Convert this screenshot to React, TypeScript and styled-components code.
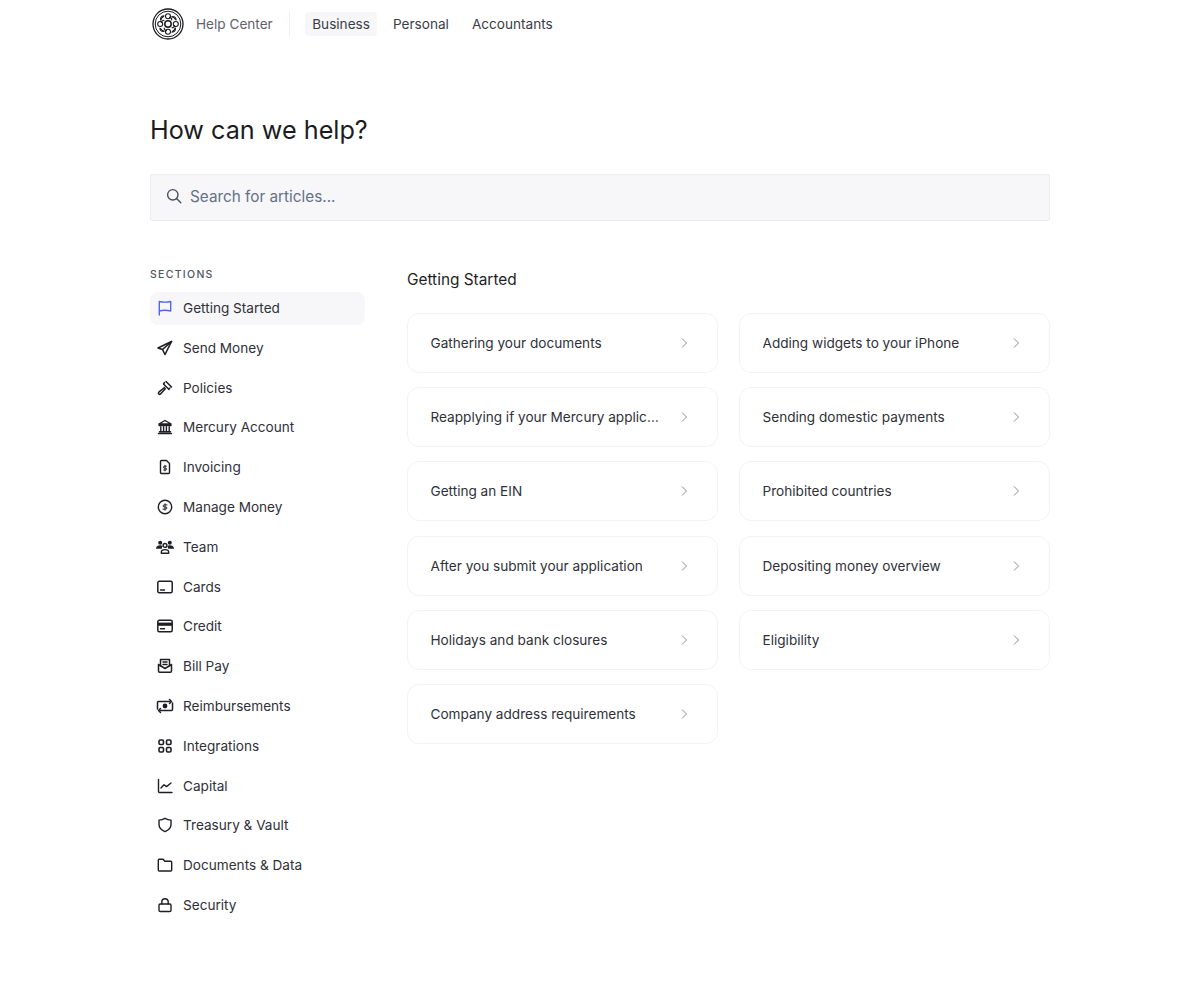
import React from "react";
import styled, { createGlobalStyle } from "styled-components";

const Global = createGlobalStyle`
  html, body { margin: 0; padding: 0; background: #fff; }
  body { font-family: "Inter", "Liberation Sans", sans-serif; color: #1e1f25; }
  * { box-sizing: border-box; }
`;
const Page = styled.div`
  width: 900px;
  margin: 0 auto;
  height: 1006px;
  overflow: hidden;
`;
const Header = styled.header`
  height: 48px;
  display: flex;
  align-items: center;
`;
const LogoMark = styled.svg`
  width: 32px;
  height: 32px;
  margin-left: 2px;
  color: #1a1a1f;
`;
const HelpLabel = styled.span`
  margin-left: 12px;
  font-size: 13.6px;
  color: #5f626d;
`;
const Divider = styled.span`
  width: 1px;
  height: 24px;
  margin: 0 15px 0 16px;
  background: #f0f0f3;
`;
const NavList = styled.nav`
  display: flex;
  align-items: center;
  gap: 8px;
`;
const NavLink = styled.a<{ $active?: boolean }>`
  padding: 4px 7.5px;
  height: 24px;
  line-height: 16px;
  border-radius: 4px;
  font-size: 13.6px;
  color: #3a3c45;
  background: ${(p) => (p.$active ? "#f7f7f9" : "transparent")};
`;
const Title = styled.h1`
  margin: 65px 0 0;
  height: 34px;
  font-size: 25.2px;
  line-height: 34px;
  font-weight: 400;
  color: #1b1c22;
`;
const SearchBar = styled.div`
  margin-top: 27px;
  height: 47px;
  display: flex;
  align-items: center;
  gap: 8px;
  padding: 0 0 3px 15px;
  background: #f7f7f9;
  border: 1px solid #ececef;
  border-radius: 2px;
`;
const SearchText = styled.span`
  font-size: 15.3px;
  color: #667087;
`;
const Columns = styled.div`
  margin-top: 47px;
  display: grid;
  grid-template-columns: 215px 643px;
  column-gap: 42px;
`;
const SectionLabel = styled.div`
  margin-top: 1px;
  height: 12px;
  line-height: 12px;
  font-size: 10.5px;
  font-weight: 500;
  letter-spacing: 1.3px;
  color: #535461;
  margin-bottom: 11px;
`;
const SideNav = styled.div`
  display: flex;
  flex-direction: column;
  gap: 6.8px;
`;
const SideItem = styled.a<{ $active?: boolean }>`
  height: 33px;
  display: flex;
  align-items: center;
  gap: 10px;
  padding: 0 0 1px 7px;
  border-radius: 8px;
  font-size: 13.6px;
  color: #2f3038;
  background: ${(p) => (p.$active ? "#f7f7f9" : "transparent")};
`;
const Icon = styled.svg<{ $active?: boolean }>`
  width: 16px;
  height: 16px;
  flex: none;
  overflow: visible;
  color: ${(p) => (p.$active ? "#5266eb" : "#1e1f25")};
`;
const MainTitle = styled.h2`
  margin: 2px 0 0;
  height: 20px;
  line-height: 20px;
  font-size: 15.4px;
  font-weight: 400;
  color: #1e1f25;
`;
const CardGrid = styled.div`
  margin-top: 22.5px;
  display: grid;
  grid-template-columns: 311px 311px;
  column-gap: 21px;
  row-gap: 14.4px;
`;
const Card = styled.a`
  height: 60px;
  display: flex;
  align-items: center;
  justify-content: space-between;
  padding: 0 27px 0 22.5px;
  border: 1px solid #f3f3f5;
  border-radius: 12px;
  font-size: 13.6px;
  color: #2f3038;
`;
const CardText = styled.span`
  max-width: 232px;
  overflow: hidden;
  white-space: nowrap;
  text-overflow: ellipsis;
`;
const Chevron = styled.svg`
  width: 12px;
  height: 12px;
  flex: none;
  color: #8a8c96;
`;

const s = { fill: "none", stroke: "currentColor", strokeWidth: 1.4, strokeLinecap: "round", strokeLinejoin: "round" } as const;

const glyphs: Record<string, React.ReactNode> = {
  flag: <path {...s} d="M2.300 15V1.500c3.800.8 7.600.8 11.400 0v9.500c-3.800-1-7.600-1-11.400 0" />,
  send: <g {...s} strokeWidth={1.6}><path d="M14.500 1.500 1 8l4.500 1.500 2.500 5z" /><path d="M14.500 1.500 5.500 9.500" /></g>,
  gavel: <g {...s} strokeWidth={1.5}><path d="m9 1.500 5.500 5.500M6.500 4 12 9.500M7.500 2.500l-1 1.500M13 8l-1.500 1" /><path d="m7.500 7.500-5.700 4.700a1 1 0 0 0 1.700 1.800l4.800-5.200" /></g>,
  bank: <g {...s}><path d="M8 1.500 1.800 5h12.400zM2 6.500h12M3.800 8v4M6.600 8v4M9.400 8v4M12.200 8v4M2.500 12.800h11M1.500 14.500h13" /></g>,
  invoice: <g {...s}><path d="M4.500 1.500h5l3 3v9a1 1 0 0 1-1 1h-7a1 1 0 0 1-1-1v-11a1 1 0 0 1 1-1z" /><path d="M9.300 7.200H7.400a.9.9 0 0 0 0 1.900h1.200a.9.9 0 0 1 0 1.900H6.700M8 6.300v5.600" strokeWidth={1} /></g>,
  money: <g {...s}><circle cx="8" cy="8" r="6.700" /><path d="M10 5.900H7.200a1 1 0 0 0 0 2.100h1.600a1 1 0 0 1 0 2.100H6M8 4.800v6.400" strokeWidth={1} /></g>,
  team: <g fill="currentColor"><circle cx="3.200" cy="3.800" r="2" /><circle cx="12.800" cy="3.800" r="2" /><path d="M-1 9.800c0-2.300 1.500-3.500 4.200-3.500 1 0 1.800.2 2.400.6-.5.700-.8 1.700-.8 2.900zM17 9.800c0-2.300-1.500-3.500-4.200-3.500-1 0-1.800.2-2.400.6.5.7.8 1.700.8 2.900z" /><g {...s} fill="none"><circle cx="8" cy="6.400" r="1.900" /><path d="M4.300 14.300v-1.100c0-1.700 1.500-2.600 3.700-2.600s3.700.9 3.700 2.600v1.100z" /></g></g>,
  card: <g {...s} strokeWidth={1.5}><rect x=".8" y="2.300" width="14.400" height="11.400" rx="1.500" /><path d="M3.500 11h1.500M6 11h1.500" /></g>,
  credit: <g><rect x=".8" y="2.300" width="14.400" height="11.400" rx="1.500" {...s} strokeWidth={1.5} /><rect x="1" y="4.600" width="14" height="3.200" fill="currentColor" /><path {...s} d="M3.500 10.800h1.500M6 10.800h1.500" /></g>,
  bill: <g {...s} strokeWidth={1.5}><path d="M3.500 8V1.500h9V8M6 4h4M6 6.500h4" /><path d="M1.500 6.500V13a1.200 1.200 0 0 0 1.200 1.200h10.600a1.200 1.200 0 0 0 1.200-1.200V6.500L8 10.500z" /></g>,
  reimb: <g><g {...s} strokeWidth={1.5}><path d="M.5 11V4.500a1 1 0 0 1 1-1h11.500M15.500 5v6.500a1 1 0 0 1-1 1H3" /><path d="m12.500 1.500 2 2-2 2M3.500 10.500l-2 2 2 2" /></g><circle cx="8" cy="8" r="2.400" fill="currentColor" /></g>,
  grid: <g {...s} strokeWidth={1.6}><rect x="2" y="2" width="4.500" height="4.500" rx="1.200" /><rect x="9.500" y="2" width="4.500" height="4.500" rx="1.200" /><rect x="2" y="9.500" width="4.500" height="4.500" rx="1.200" /><rect x="9.500" y="9.500" width="4.500" height="4.500" rx="1.200" /></g>,
  chart: <g {...s}><path d="M1.500 1.500v12a1 1 0 0 0 1 1h12.500" /><path d="m4 10 3-3.200 2.500 1.800L14 5" /></g>,
  shield: <path {...s} d="M8 1.300c1.800 1.100 3.800 1.700 6 1.800v4.400c0 3.200-2.200 5.600-6 7.200-3.800-1.600-6-4-6-7.200V3.100c2.200-.1 4.200-.7 6-1.800z" />,
  folder: <path {...s} d="M1.300 3.300a1 1 0 0 1 1-1h3.800l1.700 2h5.900a1 1 0 0 1 1 1v7.700a1 1 0 0 1-1 1H2.300a1 1 0 0 1-1-1z" />,
  lock: <g {...s}><rect x="2" y="7" width="12" height="7.500" rx="1.200" /><path d="M4.800 7V5a3.200 3.200 0 0 1 6.400 0v2" /></g>,
};

const sections: [string, string][] = [
  ["flag", "Getting Started"], ["send", "Send Money"], ["gavel", "Policies"], ["bank", "Mercury Account"],
  ["invoice", "Invoicing"], ["money", "Manage Money"], ["team", "Team"], ["card", "Cards"], ["credit", "Credit"],
  ["bill", "Bill Pay"], ["reimb", "Reimbursements"], ["grid", "Integrations"], ["chart", "Capital"],
  ["shield", "Treasury & Vault"], ["folder", "Documents & Data"], ["lock", "Security"],
];
const articles = [
  "Gathering your documents", "Adding widgets to your iPhone",
  "Reapplying if your Mercury application was rejected", "Sending domestic payments",
  "Getting an EIN", "Prohibited countries",
  "After you submit your application", "Depositing money overview",
  "Holidays and bank closures", "Eligibility",
  "Company address requirements",
];

const Logo = () => (
  <LogoMark viewBox="0 0 32 32" fill="none" stroke="currentColor">
    <circle cx="16" cy="16" r="15" strokeWidth="1.300" />
    <circle cx="16" cy="16" r="12.800" strokeWidth="1" />
    <circle cx="16" cy="16" r="3.200" strokeWidth="1.500" />
    {[0, 90, 180, 270].map((a) => (
      <g key={a} transform={`rotate(${a} 16 16)`} strokeWidth="1.100" strokeLinecap="round">
        <circle cx="16" cy="8.200" r="2.500" />
        <path d="M8.500 11.500c0-2 1.500-3.500 3.500-3.600M23.500 11.500c-1-1.500-2.200-2.500-3.800-2.700M12 12.200c-1.500 0-2.500 1-2.600 2.300" />
      </g>
    ))}
  </LogoMark>
);

export default function App() {
  return (
    <Page>
      <Global />
      <Header>
        <Logo />
        <HelpLabel>Help Center</HelpLabel>
        <Divider />
        <NavList>
          <NavLink $active>Business</NavLink>
          <NavLink>Personal</NavLink>
          <NavLink>Accountants</NavLink>
        </NavList>
      </Header>
      <Title>How can we help?</Title>
      <SearchBar>
        <Icon viewBox="0 0 16 16"><g {...s} stroke="#4b4f5c"><circle cx="6.800" cy="6.800" r="5.200" /><path d="m10.800 10.800 4 4" /></g></Icon>
        <SearchText>Search for articles...</SearchText>
      </SearchBar>
      <Columns>
        <aside>
          <SectionLabel>SECTIONS</SectionLabel>
          <SideNav>
            {sections.map(([k, label], i) => (
              <SideItem key={label} $active={i === 0}>
                <Icon viewBox="0 0 16 16" $active={i === 0}>{glyphs[k]}</Icon>
                {label}
              </SideItem>
            ))}
          </SideNav>
        </aside>
        <main>
          <MainTitle>Getting Started</MainTitle>
          <CardGrid>
            {articles.map((t) => (
              <Card key={t}>
                <CardText>{t}</CardText>
                <Chevron viewBox="0 0 12 12"><path d="m4 1.500 4.500 4.500L4 10.500" fill="none" stroke="currentColor" strokeWidth="1" /></Chevron>
              </Card>
            ))}
          </CardGrid>
        </main>
      </Columns>
    </Page>
  );
}
